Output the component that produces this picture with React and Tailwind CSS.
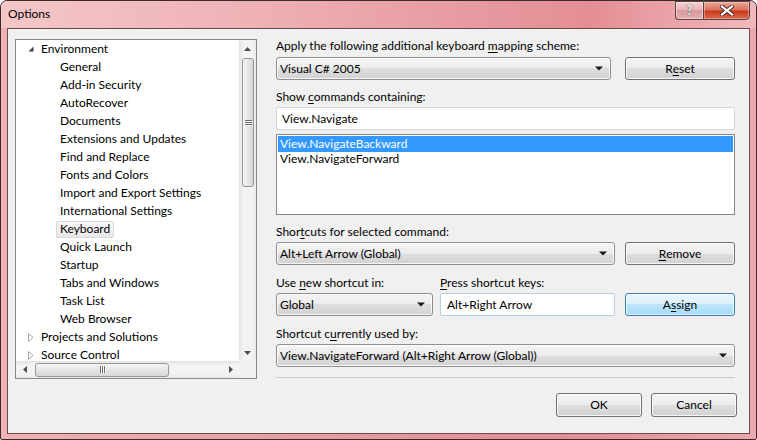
import React from 'react';

const treeItems = [
  'General',
  'Add-in Security',
  'AutoRecover',
  'Documents',
  'Extensions and Updates',
  'Find and Replace',
  'Fonts and Colors',
  'Import and Export Settings',
  'International Settings',
  'Keyboard',
  'Quick Launch',
  'Startup',
  'Tabs and Windows',
  'Task List',
  'Web Browser',
];

const U = ({ children }) => <span className="underline underline-offset-[2px]">{children}</span>;

const DropArrow = () => (
  <svg width="8" height="5" viewBox="0 0 8 5" className="shrink-0">
    <path d="M0 0.5h8L4 4.5z" fill="#1a1a1a" />
  </svg>
);

const Button = ({ children, className = '', blue = false }) => (
  <div
    className={`flex items-center justify-center rounded-[3px] border ${
      blue
        ? 'border-[#3c7fb1] bg-[linear-gradient(#eaf6fd_0%,#d9f0fc_50%,#bee6fd_50%,#a7d9f5_100%)] shadow-[inset_0_0_0_1px_rgba(255,255,255,0.7)]'
        : 'border-[#707070] bg-[linear-gradient(#f4f4f4_0%,#ececec_50%,#dedede_50%,#d2d2d2_100%)] shadow-[inset_0_0_0_1px_rgba(255,255,255,0.8)]'
    } ${className}`}
  >
    {children}
  </div>
);

const Combo = ({ text, className = '' }) => (
  <div
    className={`flex items-center h-[23px] rounded-[3px] border border-[#8e8f8f] bg-[linear-gradient(#f4f4f4_0%,#ececec_50%,#dedede_50%,#d2d2d2_100%)] shadow-[inset_0_0_0_1px_rgba(255,255,255,0.8)] pl-[3px] pr-[7px] ${className}`}
  >
    <span className="flex-1 truncate">{text}</span>
    <DropArrow />
  </div>
);

const Grip = ({ vertical }) => (
  <div className={`flex ${vertical ? 'flex-col gap-[1px]' : 'flex-row gap-[1px]'}`}>
    {[0, 1, 2].map((i) => (
      <div
        key={i}
        className={vertical ? 'w-[7px] h-[1px] bg-[#6b6b6b] shadow-[0_1px_0_#ffffff]' : 'w-[1px] h-[7px] bg-[#6b6b6b] shadow-[1px_0_0_#ffffff]'}
      />
    ))}
  </div>
);

const TitleButtons = () => (
  <div className="flex self-start">
    <div className="w-[28px] h-[19px] flex items-center justify-center border border-[#5e3f41] border-r-0 rounded-bl-[4px] bg-[linear-gradient(#f4cfd1_0%,#eab2b5_50%,#dc9a9e_50%,#e4aeb1_100%)] shadow-[inset_0_0_0_1px_rgba(255,255,255,0.45)]">
      <span className="text-[13px] font-bold leading-none text-white [text-shadow:0_0_1px_#3a3a3a,0_0_1px_#3a3a3a]">?</span>
    </div>
    <div className="w-[47px] h-[19px] flex items-center justify-center border border-[#5e3f41] rounded-br-[4px] bg-[linear-gradient(#eaa898_0%,#d9735c_45%,#c9391c_55%,#d96a4f_100%)] shadow-[inset_0_0_0_1px_rgba(255,255,255,0.35)]">
      <svg width="14" height="11" viewBox="0 0 14 11">
        <path d="M2 1.5L12 9.5M12 1.5L2 9.5" stroke="#4a2a24" strokeWidth="4" strokeLinecap="square" />
        <path d="M2 1.5L12 9.5M12 1.5L2 9.5" stroke="#ffffff" strokeWidth="2.2" strokeLinecap="square" />
      </svg>
    </div>
  </div>
);

const Tree = () => (
  <div className="w-[242px] h-[340px] border border-[#828790] bg-white flex flex-col">
    <div className="flex h-[321px]">
      <div className="w-[223px] h-[321px] overflow-hidden">
        <div className="h-[18px] flex items-center pl-[12px]">
          <svg width="6" height="6" viewBox="0 0 6 6" className="shrink-0">
            <path d="M5.5 0.5V5.5H0.5z" fill="#404040" />
          </svg>
          <span className="ml-[7px] whitespace-nowrap">Environment</span>
        </div>
        {treeItems.map((item) => (
          <div key={item} className="h-[18px] flex items-center pl-[40px]">
            <span
              className={`h-[17px] flex items-center px-[3px] border rounded-[2px] whitespace-nowrap ${
                item === 'Keyboard'
                  ? 'border-[#d9d9d9] bg-[linear-gradient(#f8f8f8,#e8e8e8)]'
                  : 'border-transparent'
              }`}
            >
              {item}
            </span>
          </div>
        ))}
        {['Projects and Solutions', 'Source Control'].map((item) => (
          <div key={item} className="h-[18px] flex items-center pl-[12px]">
            <svg width="6" height="9" viewBox="0 0 6 9" className="shrink-0">
              <path d="M0.5 0.5L5 4.5L0.5 8.5z" fill="#ffffff" stroke="#a6a6a6" />
            </svg>
            <span className="ml-[7px] whitespace-nowrap">{item}</span>
          </div>
        ))}
      </div>
      <div className="w-[17px] h-[321px] flex flex-col bg-[linear-gradient(90deg,#e2e2e2_0%,#f3f3f3_25%,#f3f3f3_75%,#e9e9e9_100%)]">
        <div className="h-[17px] flex items-center justify-center">
          <svg width="7" height="4" viewBox="0 0 7 4">
            <path d="M0 4L3.5 0L7 4z" fill="#4d4d4d" />
          </svg>
        </div>
        <div className="mt-[1px] ml-[3px] mr-[2px] h-[129px] rounded-[3px] border border-[#979797] bg-[linear-gradient(90deg,#f5f5f5_0%,#e6e6e6_50%,#d6d6d6_100%)] flex items-center justify-center">
          <Grip vertical />
        </div>
        <div className="flex-1" />
        <div className="h-[17px] flex items-center justify-center">
          <svg width="7" height="4" viewBox="0 0 7 4">
            <path d="M0 0L3.5 4L7 0z" fill="#4d4d4d" />
          </svg>
        </div>
      </div>
    </div>
    <div className="flex h-[17px]">
      <div className="w-[223px] flex items-center bg-[linear-gradient(#e2e2e2_0%,#f3f3f3_25%,#f3f3f3_75%,#e9e9e9_100%)]">
        <div className="w-[17px] h-[17px] flex items-center justify-center">
          <svg width="4" height="7" viewBox="0 0 4 7">
            <path d="M4 0L0 3.5L4 7z" fill="#4d4d4d" />
          </svg>
        </div>
        <div className="ml-[2px] w-[134px] h-[14px] rounded-[3px] border border-[#979797] bg-[linear-gradient(#f5f5f5_0%,#e6e6e6_50%,#d6d6d6_100%)] flex items-center justify-center">
          <Grip />
        </div>
        <div className="flex-1" />
        <div className="w-[17px] h-[17px] flex items-center justify-center">
          <svg width="4" height="7" viewBox="0 0 4 7">
            <path d="M0 0L4 3.5L0 7z" fill="#4d4d4d" />
          </svg>
        </div>
      </div>
      <div className="w-[17px] bg-[#f0f0f0]" />
    </div>
  </div>
);

const KeyboardPanel = () => (
  <div className="w-[459px] flex flex-col">
    <div className="h-[16px] leading-[16px] whitespace-nowrap">
      Apply the following additional keyboard <U>m</U>apping scheme:
    </div>
    <div className="mt-[3px] flex justify-between">
      <Combo text="Visual C# 2005" className="w-[335px]" />
      <Button className="w-[110px] h-[23px]">
        R<U>e</U>set
      </Button>
    </div>

    <div className="mt-[9px] h-[16px] leading-[16px]">
      Show <U>c</U>ommands containing:
    </div>
    <div className="mt-[2px] h-[23px] flex items-center pl-[5px] border border-[#d3d6da] rounded-[2px] bg-white">
      View.Navigate
    </div>
    <div className="mt-[4px] h-[81px] border border-[#828790] bg-white flex flex-col pt-[1px]">
      <div className="mx-[1px] h-[16px] flex items-center pl-[2px] bg-[#3399ff] text-white">
        View.NavigateBackward
      </div>
      <div className="mx-[1px] h-[14px] flex items-center pl-[2px]">View.NavigateForward</div>
    </div>

    <div className="mt-[9px] h-[16px] leading-[16px]">
      Shor<U>t</U>cuts for selected command:
    </div>
    <div className="mt-[2px] flex justify-between">
      <Combo text="Alt+Left Arrow (Global)" className="w-[339px]" />
      <Button className="w-[110px] h-[23px]">
        <U>R</U>emove
      </Button>
    </div>

    <div className="mt-[10px] h-[16px] leading-[16px] flex">
      <span className="w-[164px]">
        Use <U>n</U>ew shortcut in:
      </span>
      <span>
        <U>P</U>ress shortcut keys:
      </span>
    </div>
    <div className="mt-[2px] flex">
      <Combo text="Global" className="w-[157px]" />
      <div className="ml-[7px] w-[175px] h-[23px] flex items-center pl-[6px] border border-[#b9cde0] rounded-[2px] bg-white">
        Alt+Right Arrow
      </div>
      <Button blue className="ml-auto w-[110px] h-[23px]">
        A<U>s</U>sign
      </Button>
    </div>

    <div className="mt-[10px] h-[16px] leading-[16px]">
      Shortcut c<U>u</U>rrently used by:
    </div>
    <Combo text="View.NavigateForward (Alt+Right Arrow (Global))" className="mt-[2px]" />

    <div className="mt-[10px] h-[1px] bg-[#c9c9c9]" />

    <div className="mt-[15px] -mr-[2px] flex justify-end gap-[9px]">
      <Button className="w-[86px] h-[24px]">OK</Button>
      <Button className="w-[86px] h-[24px]">Cancel</Button>
    </div>
  </div>
);

export default function App() {
  return (
    <div className="w-[757px] h-[440px] flex flex-col border border-[#3b2b2c] rounded-t-[7px] rounded-b-[2px] overflow-hidden bg-[linear-gradient(90deg,#eeb2b5_0%,#e69ea2_40%,#e38d93_75%,#eca8ac_100%)] font-[Lato,sans-serif] text-[12px] text-black">
      <div className="h-[27px] flex items-center justify-between pl-[7px] pr-[6px] bg-[linear-gradient(90deg,#f4c6c8_0%,#efb4b7_30%,#e79ca1_60%,#e48e94_78%,#f1b9bc_100%)]">
        <span className="pb-[1px]">Options</span>
        <TitleButtons />
      </div>
      <div className="flex-1 mx-[6px] mb-[5px] border border-[#6b4d4f] bg-[#f0f0f0] flex items-start">
        <div className="ml-[7px] mt-[10px]">
          <Tree />
        </div>
        <div className="ml-[19px] mt-[9px]">
          <KeyboardPanel />
        </div>
      </div>
    </div>
  );
}
